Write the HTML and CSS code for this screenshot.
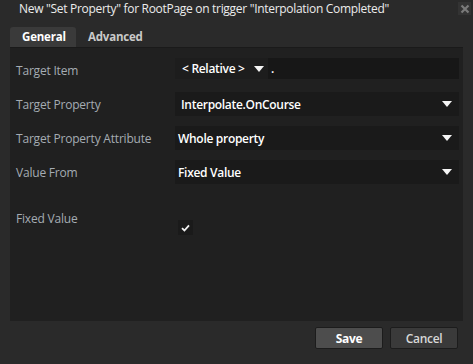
FILE: index.html
```html
<!DOCTYPE html>
<html>
<head>
<meta charset="utf-8">
<link rel="stylesheet" href="styles.css">
</head>
<body>
<div class="window">
  <div class="titlebar">
    <span class="title">New "Set Property" for RootPage on trigger "Interpolation Completed"</span>
    <span class="close"><svg width="10" height="10" viewBox="0 0 10 10"><path d="M1.5 1.5 L8.5 8.5 M8.5 1.5 L1.5 8.5" stroke="#7a7a7a" stroke-width="2.2"/></svg></span>
  </div>
  <div class="tabs">
    <div class="tab active">General</div>
    <div class="tab">Advanced</div>
  </div>
  <div class="panel">
    <div class="row">
      <div class="label">Target Item</div>
      <div class="field split">
        <div class="rel">&lt; Relative &gt; <span class="arrow small"></span></div>
        <div class="dot">.</div>
      </div>
    </div>
    <div class="row">
      <div class="label">Target Property</div>
      <div class="field combo"><span class="val pad6">Interpolate.OnCourse</span><span class="arrow"></span></div>
    </div>
    <div class="row">
      <div class="label">Target Property Attribute</div>
      <div class="field combo"><span class="val">Whole property</span><span class="arrow"></span></div>
    </div>
    <div class="row">
      <div class="label">Value From</div>
      <div class="field combo"><span class="val">Fixed Value</span><span class="arrow"></span></div>
    </div>
    <div class="row check-row">
      <div class="label">Fixed Value</div>
      <div class="checkcell">
        <span class="checkbox"><svg width="9" height="8" viewBox="0 0 9 8"><path d="M1 4.2 L3.4 6.5 L8 1.3" fill="none" stroke="#f0f0f0" stroke-width="1.8"/></svg></span>
      </div>
    </div>
  </div>
  <div class="footer">
    <button class="btn save">Save</button>
    <button class="btn cancel">Cancel</button>
  </div>
</div>
</body>
</html>
```
FILE: styles.css
```css
html, body {
  margin: 0;
  padding: 0;
  background: #2a2a2a;
}
.window {
  width: 473px;
  height: 364px;
  background: #2a2a2a;
  font-family: "Open Sans", "Noto Sans", sans-serif;
  font-size: 12px;
  color: #e6e6e6;
  display: flex;
  flex-direction: column;
  box-sizing: border-box;
}
.titlebar {
  height: 27px;
  display: flex;
  align-items: flex-start;
  justify-content: space-between;
  position: relative;
}
.title {
  margin: 1px 0 0 19px;
  font-size: 12px;
  letter-spacing: -0.3px;
  color: #ececec;
  line-height: 16px;
}
.close {
  width: 13px;
  height: 13px;
  background: #333333;
  margin: 2px 2px 0 0;
  display: flex;
  align-items: center;
  justify-content: center;
}
.tabs {
  display: flex;
  height: 20px;
  margin: 0 10px;
  border-bottom: 1px solid #1a1a1a;
}
.tab {
  font-weight: 700;
  font-size: 11.5px;
  line-height: 20px;
  color: #c9c9c9;
  padding: 0 12px;
  letter-spacing: -0.2px;
}
.tab.active {
  background: #3a3a3a;
  color: #ffffff;
  border-radius: 3px 3px 0 0;
  width: 66px;
  box-sizing: border-box;
  padding: 0 0 0 12px;
}
.panel {
  margin: 0 10px;
  height: 273px;
  background: #202020;
  padding: 10px 4px 0 6px;
  box-sizing: border-box;
  display: flex;
  flex-direction: column;
  gap: 10px;
}
.row {
  display: flex;
  height: 24px;
  align-items: center;
}
.label {
  width: 159px;
  flex: none;
  color: #a5acb3;
  font-size: 12px;
  letter-spacing: -0.2px;
}
.field {
  flex: 1;
  height: 24px;
  background: #1a1a1a;
  display: flex;
  align-items: center;
  font-weight: 600;
  color: #ffffff;
  font-size: 12px;
  letter-spacing: -0.3px;
}
.split {
  height: 21px;
  align-self: flex-start;
  background: #171717;
}
.rel {
  width: 93px;
  height: 21px;
  background: #1d1d1d;
  display: flex;
  align-items: center;
  padding-left: 7px;
  box-sizing: border-box;
}
.rel .arrow.small {
  margin-left: 9px;
}
.dot {
  padding-left: 3px;
}
.combo {
  justify-content: space-between;
  padding: 0 7px 0 3px;
}
.val.pad6 {
  padding-left: 3px;
}
.arrow {
  width: 0;
  height: 0;
  border-left: 5px solid transparent;
  border-right: 5px solid transparent;
  border-top: 6px solid #f5f5f5;
}
.check-row {
  margin-top: 17px;
  align-items: flex-start;
}
.check-row .label {
  line-height: 16px;
}
.checkcell {
  padding: 9px 0 0 3px;
}
.checkbox {
  width: 15px;
  height: 15px;
  background: #1a1a1a;
  display: flex;
  align-items: center;
  justify-content: center;
}
.footer {
  display: flex;
  justify-content: flex-end;
  gap: 7px;
  padding: 6px 15px 0 0;
}
.btn {
  width: 68px;
  height: 22px;
  border: 1px solid #1c1c1c;
  border-radius: 2px;
  font-family: "Open Sans", "Noto Sans", sans-serif;
  font-size: 12px;
  letter-spacing: -0.3px;
  padding: 0;
}
.save {
  background: #4d4d4d;
  color: #ffffff;
  font-weight: 700;
}
.cancel {
  background: #3a3a3a;
  color: #d8d8d8;
  font-weight: 600;
}
```
